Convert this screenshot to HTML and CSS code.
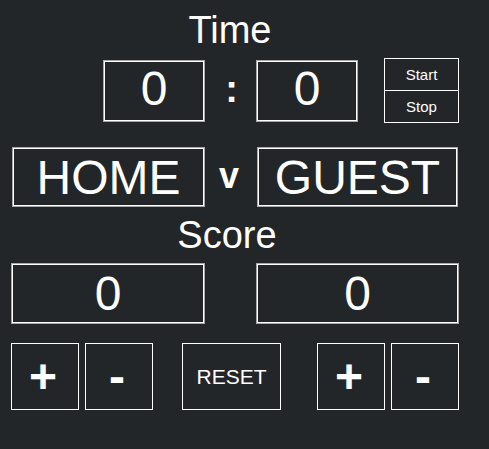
FILE: index.html
```html
<!DOCTYPE html>
<html lang="en">
<head>
<meta charset="utf-8">
<title>Scoreboard</title>
<link rel="stylesheet" href="styles.css">
</head>
<body>
<main class="board">
  <h1 class="title title-time">Time</h1>
  <div class="row timer-row">
    <div class="cell cell-end"><div class="box timer-box">0</div></div>
    <div class="cell cell-mid"><span class="colon">:</span></div>
    <div class="cell cell-start">
      <div class="box timer-box">0</div>
      <div class="clock-btns">
        <button class="clock-btn">Start</button>
        <button class="clock-btn">Stop</button>
      </div>
    </div>
  </div>
  <div class="row name-row">
    <div class="box name-box name-home">HOME</div>
    <div class="cell cell-mid"><span class="vs">v</span></div>
    <div class="box name-box name-guest">GUEST</div>
  </div>
  <h2 class="title title-score">Score</h2>
  <div class="row score-row">
    <div class="box score-box">0</div>
    <div class="cell"></div>
    <div class="box score-box">0</div>
  </div>
  <div class="controls">
    <div class="pair">
      <button class="ctl-btn sym">+</button>
      <button class="ctl-btn sym">-</button>
    </div>
    <button class="ctl-btn reset">RESET</button>
    <div class="pair pair-right">
      <button class="ctl-btn sym">+</button>
      <button class="ctl-btn sym">-</button>
    </div>
  </div>
</main>
</body>
</html>
```

FILE: styles.css
```css
html, body {
  margin: 0;
  padding: 0;
  background: #232629;
  color: #ffffff;
  font-family: "Liberation Sans", Arial, sans-serif;
}

.board {
  width: 448px;
  margin-left: 11px;
  padding-top: 8px;
}

.title {
  margin: 0;
  font-size: 38px;
  font-weight: normal;
  line-height: 44px;
  text-align: center;
  padding-right: 10px;
}

.row {
  display: grid;
  grid-template-columns: 194px 51px 203px;
}

.cell {
  display: flex;
  align-items: center;
}

.cell-end { justify-content: flex-end; }
.cell-mid { justify-content: center; }
.cell-start { justify-content: flex-start; }

.box {
  box-sizing: border-box;
  border: 1px solid #a8a8a8;
  box-shadow: inset 0 0 0 1px #ffffff;
  display: flex;
  align-items: center;
  justify-content: center;
  font-size: 48px;
}

.timer-row {
  margin-top: 6px;
  height: 65px;
}

.timer-box {
  width: 102px;
  height: 62px;
  padding-bottom: 4px;
}

.colon {
  font-size: 38px;
  font-weight: bold;
  line-height: 1;
  margin-left: 2px;
  margin-top: -4px;
}

.clock-btns {
  margin-left: auto;
  width: 75px;
  height: 65px;
  display: flex;
  flex-direction: column;
}

.clock-btn {
  flex: 1;
  margin: 0;
  padding: 0;
  background: transparent;
  color: #ffffff;
  border: 1px solid #ffffff;
  font-family: "Liberation Sans", Arial, sans-serif;
  font-size: 15px;
}

.clock-btn + .clock-btn {
  border-top: 0;
}

.name-row {
  margin-top: 24px;
  height: 60px;
}

.name-home {
  margin-left: 1px;
  width: 193px;
}

.name-guest {
  margin-left: 1px;
  width: 201px;
}

.vs {
  font-size: 36px;
  font-weight: bold;
  line-height: 1;
  margin-left: -3px;
  margin-top: -2px;
}

.title-score {
  margin-top: 6px;
  padding-right: 16px;
}

.score-row {
  margin-top: 6px;
  height: 61px;
}

.controls {
  margin-top: 19px;
  display: flex;
  align-items: stretch;
  height: 67px;
}

.pair {
  display: flex;
  gap: 6px;
}

.pair-right {
  margin-left: auto;
}

.ctl-btn {
  margin: 0;
  padding: 0;
  background: transparent;
  color: #ffffff;
  border: 1px solid #ffffff;
  font-family: "Liberation Sans", Arial, sans-serif;
  box-sizing: border-box;
}

.sym {
  width: 68px;
  height: 67px;
  font-size: 48px;
  font-weight: bold;
  line-height: 1;
  padding-right: 4px;
}

.reset {
  margin-left: 29px;
  width: 99px;
  height: 67px;
  font-size: 21px;
}
```
